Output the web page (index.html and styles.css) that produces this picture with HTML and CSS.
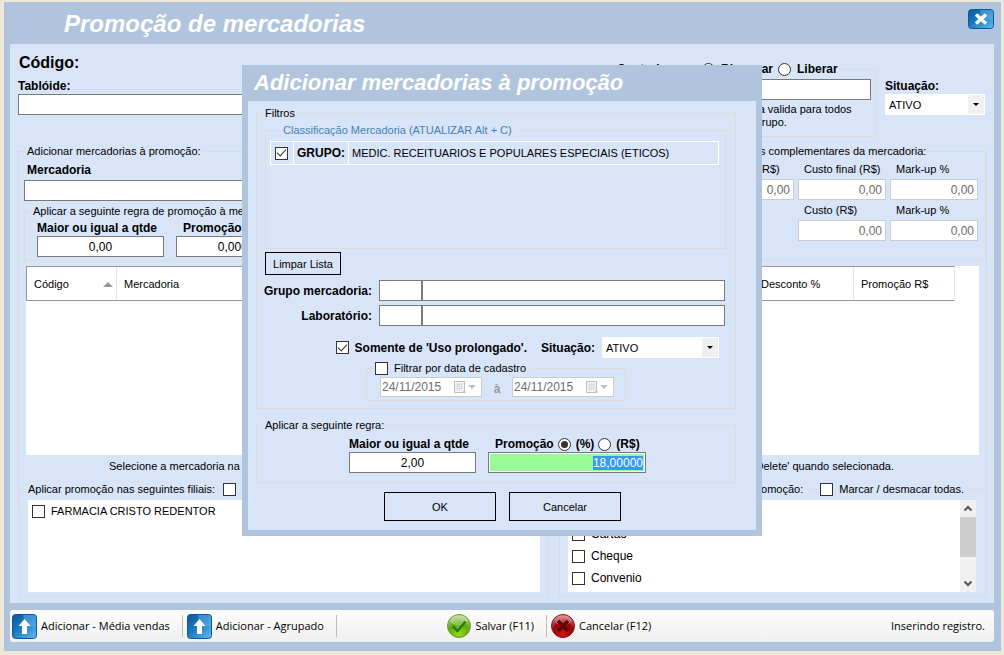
FILE: index.html
```html
<!DOCTYPE html>
<html lang="pt-BR">
<head>
<meta charset="utf-8">
<title>Promoção de mercadorias</title>
<link rel="stylesheet" href="styles.css">
</head>
<body>
<svg class="defs" aria-hidden="true">
  <defs>
    <linearGradient id="blue" x1="0" y1="0" x2="1" y2="1">
      <stop offset="0" stop-color="#0d5596"/><stop offset=".45" stop-color="#1c7abf"/><stop offset="1" stop-color="#62bdf2"/>
    </linearGradient>
    <radialGradient id="green" cx=".5" cy=".85" r=".85">
      <stop offset="0" stop-color="#8fdc1c"/><stop offset=".55" stop-color="#5fa814"/><stop offset="1" stop-color="#b9dc8a"/>
    </radialGradient>
    <radialGradient id="red" cx=".5" cy=".85" r=".85">
      <stop offset="0" stop-color="#d21414"/><stop offset=".55" stop-color="#960508"/><stop offset="1" stop-color="#d98a8a"/>
    </radialGradient>
    <symbol id="up" viewBox="0 0 25 25">
      <rect x=".5" y=".5" width="24" height="24" rx="3" fill="url(#blue)" stroke="#0c5a9c"/>
      <path d="M11 1h10q3 0 3 3v8q-6 1-11 0z" fill="#6db9e8" opacity=".45"/>
      <path d="M12.500 5l6 7h-3.500v8h-5v-8H6.500z" fill="#fff"/>
    </symbol>
    <symbol id="calendar" viewBox="0 0 12 13">
      <path d="M.5.5h10v9l-2 2h-8z" fill="#f4f4f4" stroke="#bdbdbd"/>
      <path d="M2 3.500h7M2 5.500h7M2 7.500h7M3.500 2v8M5.500 2v8M7.500 2v7" stroke="#dadae2" stroke-width="1"/>
      <path d="M8.500 12l3-3v3z" fill="#bdbdbd"/>
    </symbol>
  </defs>
</svg>

<main class="window">
  <header class="titlebar">
    <h1>Promoção de mercadorias</h1>
    <button class="close" type="button" aria-label="Fechar">
      <svg viewBox="0 0 26 20">
        <rect x=".5" y=".5" width="25" height="19" rx="3" fill="url(#blue)" stroke="#0c5a9c"/>
        <path d="M12 1h10q3 0 3 3v6q-6 1-12 0z" fill="#6db9e8" opacity=".45"/>
        <path d="M8 5.500l10 9M18 5.500l-10 9" stroke="#fff" stroke-width="3.600"/>
      </svg>
    </button>
  </header>

  <section class="panel">
    <div class="top">
      <div class="stack">
        <h2>Código:</h2>
        <label class="strong" for="tabloide">Tablóide:</label>
        <input class="box" id="tabloide" type="text">
      </div>
      <fieldset class="group control">
        <legend class="strong"><span>Controlar:</span>
          <label><input type="radio" name="controle">Bloquear</label>
          <label><input type="radio" name="controle">Liberar</label>
        </legend>
        <div class="control-body">
          <input class="box" type="text" aria-label="Controle">
          <p>Promoção cadastrada fica valida para todos<br>clientes cadastrados do grupo.</p>
        </div>
      </fieldset>
      <div class="stack status">
        <label class="strong" for="situacao">Situação:</label>
        <span class="select"><select id="situacao"><option>ATIVO</option><option>INATIVO</option></select></span>
      </div>
    </div>

    <fieldset class="group goods">
      <legend>Adicionar mercadorias à promoção:</legend>
      <div class="goods-columns">
        <div class="goods-left">
          <label class="strong" for="mercadoria">Mercadoria</label>
          <input class="box" id="mercadoria" type="text">
          <fieldset class="group">
            <legend>Aplicar a seguinte regra de promoção à mercadoria:</legend>
            <div class="rule">
              <div class="stack"><label class="strong" for="qtde">Maior ou igual a qtde</label><input class="box center" id="qtde" value="0,00"></div>
              <div class="stack"><label class="strong" for="promo">Promoção</label><input class="box center" id="promo" value="0,00000"></div>
            </div>
          </fieldset>
        </div>
        <fieldset class="group info">
          <legend>Informações complementares da mercadoria:</legend>
          <div class="info-grid">
            <label>P. Venda (R$)<input class="box" value="0,00" disabled></label>
            <label>Custo final (R$)<input class="box" value="0,00" disabled></label>
            <label>Mark-up %<input class="box" value="0,00" disabled></label>
            <label class="second">Custo (R$)<input class="box" value="0,00" disabled></label>
            <label>Mark-up %<input class="box" value="0,00" disabled></label>
          </div>
        </fieldset>
      </div>
      <div class="list">
        <table>
          <thead><tr><th class="code">Código</th><th>Mercadoria</th><th class="num">Desconto %</th><th class="num">Promoção R$</th></tr></thead>
        </table>
      </div>
      <p class="hint"><span>Selecione a mercadoria na lista para alterar</span><span>ou pressione 'Delete' quando selecionada.</span></p>
    </fieldset>

    <div class="bottom">
      <fieldset class="group">
        <legend><span>Aplicar promoção nas seguintes filiais:</span><i></i><label><input type="checkbox">Marcar / desmacar todas.</label></legend>
        <ul class="checks narrow">
          <li><label><input type="checkbox">FARMACIA CRISTO REDENTOR</label></li>
        </ul>
      </fieldset>
      <fieldset class="group payments">
        <legend><span>Formas de pagamento participantes da promoção:</span><i></i><label><input type="checkbox">Marcar / desmacar todas.</label></legend>
        <div class="scroller">
          <ul class="checks">
            <li><label><input type="checkbox">Boleto</label></li>
            <li><label><input type="checkbox">Cartão</label></li>
            <li><label><input type="checkbox">Cheque</label></li>
            <li><label><input type="checkbox">Convenio</label></li>
          </ul>
          <div class="scrollbar">
            <svg viewBox="0 0 15 17"><path d="M4 10.500l3.500-3.500 3.500 3.500" fill="none" stroke="#555" stroke-width="2"/></svg>
            <div class="thumb"></div>
            <svg viewBox="0 0 15 17"><path d="M4 6.500l3.500 3.500 3.500-3.500" fill="none" stroke="#555" stroke-width="2"/></svg>
          </div>
        </div>
      </fieldset>
    </div>
  </section>

  <footer class="toolbar">
    <button type="button"><svg class="up"><use href="#up"/></svg>Adicionar - Média vendas</button>
    <span class="sep"></span>
    <button type="button"><svg class="up"><use href="#up"/></svg>Adicionar - Agrupado</button>
    <span class="sep"></span>
    <span class="space-a"></span>
    <button type="button"><svg class="ball" viewBox="0 0 24 24"><circle cx="12" cy="12" r="11.500" fill="url(#green)" stroke="#6c9a35"/><ellipse cx="12" cy="6.500" rx="8.500" ry="5" fill="#fff" opacity=".3"/><path d="M6 12.500l4.500 4.500 8-9.500" fill="none" stroke="#2d7a0c" stroke-width="2.500"/></svg>Salvar (F11)</button>
    <span class="sep"></span>
    <button type="button"><svg class="ball" viewBox="0 0 24 24"><circle cx="12" cy="12" r="11.500" fill="url(#red)" stroke="#84191b"/><ellipse cx="12" cy="6.500" rx="8.500" ry="5" fill="#fff" opacity=".22"/><path d="M7 7l10 10M17 7l-10 10" stroke="#5e0406" stroke-width="3.500"/></svg>Cancelar (F12)</button>
    <span class="space-b"></span>
    <span class="state">Inserindo registro.</span>
  </footer>
</main>

<div class="overlay">
  <section class="dialog" role="dialog" aria-labelledby="dlg-title">
    <h2 id="dlg-title">Adicionar mercadorias à promoção</h2>
    <div class="dialog-body">
      <fieldset class="group filters">
        <legend>Filtros</legend>
        <div class="filters-body">
          <fieldset class="group classes">
            <legend>Classificação Mercadoria (ATUALIZAR Alt + C)</legend>
            <label class="class-row"><span><input type="checkbox" checked></span><b>GRUPO:</b><span class="name">MEDIC. RECEITUARIOS E POPULARES ESPECIAIS (ETICOS)</span></label>
          </fieldset>
          <button class="flat clear" type="button">Limpar Lista</button>
          <div class="lookup">
            <label class="strong" for="grupo">Grupo mercadoria:</label><span><input class="box" id="grupo"><input class="box" aria-label="Nome do grupo"></span>
            <label class="strong" for="lab">Laboratório:</label><span><input class="box" id="lab"><input class="box" aria-label="Nome do laboratório"></span>
          </div>
          <div class="use">
            <label class="strong check"><input type="checkbox" checked>Somente de 'Uso prolongado'.</label>
            <label class="strong" for="sit2">Situação:</label>
            <span class="select"><select id="sit2"><option>ATIVO</option><option>INATIVO</option></select></span>
          </div>
          <fieldset class="group dates">
            <legend><label><input type="checkbox">Filtrar por data de cadastro</label></legend>
            <div class="range">
              <span class="date"><input value="24/11/2015" aria-label="Data inicial" disabled><svg><use href="#calendar"/></svg><i></i></span>
              <span class="strong to">à</span>
              <span class="date"><input value="24/11/2015" aria-label="Data final" disabled><svg><use href="#calendar"/></svg><i></i></span>
            </div>
          </fieldset>
        </div>
      </fieldset>
      <fieldset class="group apply">
        <legend>Aplicar a seguinte regra:</legend>
        <div class="apply-body">
          <div class="stack"><label class="strong" for="qtde2">Maior ou igual a qtde</label><input class="box center" id="qtde2" value="2,00"></div>
          <div class="stack">
            <div class="strong kinds"><label for="promo2">Promoção</label><label><input type="radio" name="tipo" checked>(%)</label><label><input type="radio" name="tipo">(R$)</label></div>
            <input class="box active" id="promo2" value="18,00000">
          </div>
        </div>
      </fieldset>
      <div class="actions">
        <button class="flat" type="button">OK</button>
        <button class="flat" type="button">Cancelar</button>
      </div>
    </div>
  </section>
</div>
<script src="script.js"></script>
</body>
</html>
```

FILE: styles.css
```css
* { box-sizing: border-box; }
body {
  margin: 0;
  padding: 2px 3px 4px 4px;
  min-height: 100vh;
  display: flex;
  background: #ece9d8;
  color: #000;
  font: 11px/14px "Liberation Sans", Arial, sans-serif;
}
h1, h2, p, ul { margin: 0; padding: 0; }
ul { list-style: none; }
input, select, button { font: inherit; color: inherit; margin: 0; border-radius: 0; }
button { background: none; border: 0; padding: 0; }
.defs { position: absolute; width: 0; height: 0; }
.strong { font-size: 12px; font-weight: bold; white-space: nowrap; }
.stack { display: flex; flex-direction: column; }

.window { flex: 1; min-width: 0; display: flex; flex-direction: column; padding: 0 7px 9px 6px; background: #b0c4de; }
.titlebar { display: flex; justify-content: space-between; height: 42px; }
.titlebar h1 { padding-left: 54px; font: italic bold 24px/44px "Liberation Sans", Arial, sans-serif; color: #fff; }
.close { width: 26px; height: 20px; margin-top: 7px; }
.close svg { display: block; }

.panel { flex: 1; padding: 0 7px 7px 8px; background: #d8e4f8; }
.box { width: 100%; height: 21px; padding: 0 3px; border: 1px solid #7a7a7a; background: #fff; font-size: 12px; outline: 0; }
.box:disabled { border-color: #ccc; color: #6d6d6d; text-align: right; }
.center { text-align: center; }
.group { min-width: 0; margin: 0; padding: 0; border: 1px solid #dcdcdc; }
.group > legend { margin-left: 5px; padding: 0 3px; height: 14px; white-space: nowrap; }

input[type="checkbox"], input[type="radio"] {
  appearance: none;
  flex: none;
  display: grid;
  place-items: center;
  width: 13px;
  height: 13px;
  border: 1px solid #333;
  background: #fff;
}
input[type="radio"] { border-radius: 50%; }
input[type="checkbox"]:checked::after { content: ""; width: 8px; height: 4px; margin-bottom: 3px; border: solid #333; border-width: 0 0 1px 1px; transform: rotate(-47deg); }
input[type="radio"]:checked::after { content: ""; width: 7px; height: 7px; border-radius: 50%; background: #333; }

.select { position: relative; display: block; height: 21px; background: #fff; }
.select select { width: 100%; height: 100%; padding: 0 20px 0 4px; border: 0; appearance: none; background: none; outline: 0; }
.select::before { content: ""; position: absolute; top: 1px; right: 1px; bottom: 1px; width: 16px; background: #f0f0f0; }
.select::after { content: ""; position: absolute; top: 9px; right: 6px; border: solid transparent; border-width: 3px 3px 0; border-top-color: #000; pointer-events: none; }

.top { display: grid; grid-template-columns: 1fr 266px 100px; column-gap: 9px; padding: 9px 2px 0 0; height: 100px; }
.top h2 { font-size: 16px; line-height: 20px; margin-bottom: 6px; padding-left: 1px; }
.top .stack .strong { margin-bottom: 1px; }
.status { padding-top: 26px; }
.control { margin-top: 9px; height: 75px; }
.control legend, .kinds, .control legend label, .kinds label { display: flex; align-items: center; }
.control legend { gap: 5px; margin-left: 3px; }
.control legend span { width: 80px; }
.control legend label { gap: 6px; }
.control-body { padding: 3px 4px; }
.control-body p { padding: 3px 0 0 22px; line-height: 13px; white-space: nowrap; }

.goods { height: 362px; }
.goods-columns { display: grid; grid-template-columns: 1fr 412px; column-gap: 8px; padding-left: 5px; }
.goods-left { padding-top: 5px; }
.goods-left > .strong { display: block; margin: 0 0 3px 3px; }
.goods-left > .group { margin-top: 3px; height: 57px; }
.rule { display: flex; gap: 12px; padding: 3px 12px; }
.rule .stack { width: 127px; }
.rule .stack .strong { margin-bottom: 1px; }
.rule .stack + .stack .strong { padding-left: 7px; }
.info { position: relative; height: 117px; margin-top: -14px; background: linear-gradient(transparent 7px, #d8e4f8 7px); }
.info > legend { margin-left: 127px; }
.info-grid { display: grid; grid-template-columns: repeat(3, 88px); justify-content: end; gap: 3px 4px; padding: 4px 7px; }
.info-grid label { text-indent: 6px; white-space: nowrap; }
.info-grid .box { display: block; margin-top: 3px; text-indent: 0; }
.info-grid .second { grid-column: 2; }
.list { height: 189px; margin: 5px 7px 0; background: #fff; padding-right: 24px; }
.list table { width: 100%; border-collapse: separate; border-spacing: 0; table-layout: fixed; border: 1px solid #999; border-right-color: #e5e5e5; }
.list th { height: 33px; padding: 0 7px; font-weight: normal; text-align: left; border-right: 1px solid #e5e5e5; }
.list th:last-child { border-right: 0; }
.list .code { position: relative; width: 90px; }
.list .code::after { content: ""; position: absolute; right: 3px; top: 15px; border: solid transparent; border-width: 0 5px 5px; border-bottom-color: #999; }
.list .num { width: 100px; }
.hint { display: flex; justify-content: space-between; padding: 4px 92px 0 90px; }

.bottom { position: relative; display: grid; grid-template-columns: 530fr 428fr; column-gap: 10px; margin-top: -24px; padding-left: 1px; }
.bottom .group { height: 114px; background: linear-gradient(transparent 7px, #d8e4f8 7px); }
.bottom legend { display: flex; align-items: center; }
.bottom legend i { width: 5px; height: 1px; margin-left: 3px; background: #dcdcdc; }
.bottom label { display: flex; align-items: center; gap: 6px; }
.bottom .payments legend { margin: 0 19px 0 auto; }
.bottom .payments legend i { width: 14px; }
.checks { flex: 1; height: 92px; background: #fff; overflow: hidden; }
.narrow { margin: 4px 8px 0; }
.checks li { height: 22px; padding-left: 4px; display: flex; }
.checks:not(.narrow) { font-size: 12px; padding-top: 1px; }
.scroller { display: flex; margin: 4px 10px 0 8px; }
.scrollbar { width: 16px; display: flex; flex-direction: column; background: #f0f0f0; }
.scrollbar svg { height: 17px; }
.scrollbar svg:last-child { margin-top: auto; }
.thumb { height: 40px; background: #cdcdcd; }

.toolbar { display: flex; align-items: center; height: 32px; margin-top: 7px; padding: 0 9px 0 2px; border-radius: 3px; background: linear-gradient(#fdfdfd, #f0f0f0); font: 11px/16px "Open Sans", sans-serif; white-space: nowrap; }
.toolbar button { display: flex; align-items: center; gap: 4px; }
.up { width: 25px; height: 25px; }
.ball { width: 24px; height: 24px; }
.sep { width: 1px; height: 22px; margin: 0 4px 0 12px; background: #bdbdbd; }
.space-a { flex: 4; }
.space-b { flex: 9; }

.overlay { position: absolute; inset: 65px 0 auto; display: flex; justify-content: center; }
.dialog { width: 520px; padding: 0 6px 6px; background: #b0c4de; }
.dialog > h2 { padding-left: 6px; font: italic bold 22px/36px "Liberation Sans", Arial, sans-serif; color: #fff; }
.dialog-body { padding: 5px 20px 9px 8px; background: #d8e4f8; }
.filters { height: 303px; }
.filters-body { padding: 3px 9px 0 8px; display: flex; flex-direction: column; }
.classes { height: 126px; }
.classes > legend { margin-left: 11px; padding: 0 6px; color: #4682b4; }
.class-row { display: grid; grid-template-columns: 22px 56px 1fr; align-items: stretch; height: 24px; margin: 4px 6px 0 4px; border: 1px solid #fff; font-size: 11px; line-height: 22px; }
.class-row > :first-child { display: flex; align-items: center; padding-left: 4px; }
.class-row b { font-size: 12px; border: solid #fff; border-width: 0 1px; padding-left: 3px; }
.class-row .name { padding-left: 3px; white-space: nowrap; }
.flat { border: 1px solid #000; height: 29px; width: 112px; }
.clear { width: 76px; height: 23px; margin-top: 3px; }
.lookup { display: grid; grid-template-columns: auto 346px; justify-content: end; align-items: center; gap: 4px 7px; margin: 5px 1px 0 0; text-align: right; }
.lookup span { display: grid; grid-template-columns: 43px 1fr; }
.use { display: flex; align-items: center; justify-content: flex-end; margin: 11px 7px 0 0; }
.use .check { display: flex; align-items: center; gap: 6px; margin-right: 14px; }
.use .select { width: 117px; margin-left: 7px; }
.dates { width: 260px; height: 40px; margin: 3px 0 0 101px; }
.dates legend { padding-right: 7px; }
.dates label { display: flex; align-items: center; gap: 6px; }
.range { display: flex; align-items: center; padding: 2px 11px 0 13px; }
.date { display: flex; align-items: center; width: 102px; height: 20px; border: 1px solid #ccc; background: #fff; }
.date input { flex: 1; min-width: 0; padding: 0 1px; border: 0; background: none; color: #6d6d6d; font-size: 12px; }
.date svg { width: 12px; height: 13px; }
.date i { margin: 0 5px 0 2px; border: solid transparent; border-width: 4px 4px 0; border-top-color: #bdbdbd; }
.to { flex: 1; text-align: center; color: #999; padding-top: 4px; }
.apply { height: 65px; margin-top: 9px; }
.apply-body { display: grid; grid-template-columns: 127px 158px; column-gap: 12px; padding: 5px 0 0 92px; }
.apply-body .strong { height: 14px; margin-bottom: 1px; }
.kinds { padding-left: 7px; gap: 4px; }
.kinds label { gap: 5px; }
.active { padding: 0 2px; text-align: right; background: #98fb98; box-shadow: inset 0 0 0 1px #fff; }
.active::selection { background: #3399ff; color: #fff; }
.actions { display: flex; gap: 13px; padding: 9px 0 0 128px; }
```

FILE: script.js
```js
const value = document.getElementById('promo2');
value.focus();
value.select();
```
